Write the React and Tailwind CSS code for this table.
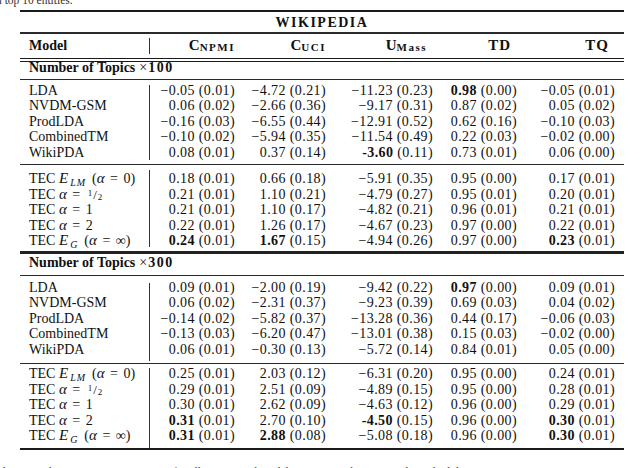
import React from "react";

// column widths after the vertical bar (right edges at 235, 326, 433, 517, 615)
const COLS = ["w-[85px]", "w-[91px]", "w-[107px]", "w-[84px]", "w-[98px]"];

const Sub = ({ children }) => (
  <span className="relative top-[3px] text-[10px] leading-none tracking-[1px] ml-[1px]">
    {children}
  </span>
);

const Half = () => (
  <span className="ml-[2px] leading-none">
    <span className="relative -top-[3px] text-[9px] leading-none">1</span>
    <span className="text-[13px] leading-none mx-[1px]">/</span>
    <span className="relative top-[1px] text-[9px] leading-none">2</span>
  </span>
);

const Eq = () => <span className="mx-[5.5px]">=</span>;
const Al = () => <i className="text-[15px] leading-[12px]">α</i>;
const E = () => <i className="text-[15px] leading-[12px] mr-[1px]">E</i>;

const tecLabels = [
  <>
    TEC <E />
    <Sub>
      <i>LM</i>
    </Sub>
    <span className="ml-[6px]">(</span>
    <Al />
    <Eq />
    0)
  </>,
  <>
    TEC <Al />
    <Eq />
    <Half />
  </>,
  <>
    TEC <Al />
    <Eq />1
  </>,
  <>
    TEC <Al />
    <Eq />2
  </>,
  <>
    TEC <E />
    <Sub>
      <i>G</i>
    </Sub>
    <span className="ml-[6px]">(</span>
    <Al />
    <Eq />
    ∞)
  </>,
];

const baseLabels = ["LDA", "NVDM-GSM", "ProdLDA", "CombinedTM", "WikiPDA"];

const data100 = [
  [["−0.05", "0.01"], ["−4.72", "0.21"], ["−11.23", "0.23"], ["0.98", "0.00", 1], ["−0.05", "0.01"]],
  [["0.06", "0.02"], ["−2.66", "0.36"], ["−9.17", "0.31"], ["0.87", "0.02"], ["0.05", "0.02"]],
  [["−0.16", "0.03"], ["−6.55", "0.44"], ["−12.91", "0.52"], ["0.62", "0.16"], ["−0.10", "0.03"]],
  [["−0.10", "0.02"], ["−5.94", "0.35"], ["−11.54", "0.49"], ["0.22", "0.03"], ["−0.02", "0.00"]],
  [["0.08", "0.01"], ["0.37", "0.14"], ["-3.60", "0.11", 1], ["0.73", "0.01"], ["0.06", "0.00"]],
];

const tec100 = [
  [["0.18", "0.01"], ["0.66", "0.18"], ["−5.91", "0.35"], ["0.95", "0.00"], ["0.17", "0.01"]],
  [["0.21", "0.01"], ["1.10", "0.21"], ["−4.79", "0.27"], ["0.95", "0.01"], ["0.20", "0.01"]],
  [["0.21", "0.01"], ["1.10", "0.17"], ["−4.82", "0.21"], ["0.96", "0.01"], ["0.21", "0.01"]],
  [["0.22", "0.01"], ["1.26", "0.17"], ["−4.67", "0.23"], ["0.97", "0.00"], ["0.22", "0.01"]],
  [["0.24", "0.01", 1], ["1.67", "0.15", 1], ["−4.94", "0.26"], ["0.97", "0.00"], ["0.23", "0.01", 1]],
];

const data300 = [
  [["0.09", "0.01"], ["−2.00", "0.19"], ["−9.42", "0.22"], ["0.97", "0.00", 1], ["0.09", "0.01"]],
  [["0.06", "0.02"], ["−2.31", "0.37"], ["−9.23", "0.39"], ["0.69", "0.03"], ["0.04", "0.02"]],
  [["−0.14", "0.02"], ["−5.82", "0.37"], ["−13.28", "0.36"], ["0.44", "0.17"], ["−0.06", "0.03"]],
  [["−0.13", "0.03"], ["−6.20", "0.47"], ["−13.01", "0.38"], ["0.15", "0.03"], ["−0.02", "0.00"]],
  [["0.06", "0.01"], ["−0.30", "0.13"], ["−5.72", "0.14"], ["0.84", "0.01"], ["0.05", "0.00"]],
];

const tec300 = [
  [["0.25", "0.01"], ["2.03", "0.12"], ["−6.31", "0.20"], ["0.95", "0.00"], ["0.24", "0.01"]],
  [["0.29", "0.01"], ["2.51", "0.09"], ["−4.89", "0.15"], ["0.95", "0.00"], ["0.28", "0.01"]],
  [["0.30", "0.01"], ["2.62", "0.09"], ["−4.63", "0.12"], ["0.96", "0.00"], ["0.29", "0.01"]],
  [["0.31", "0.01", 1], ["2.70", "0.10"], ["-4.50", "0.15", 1], ["0.96", "0.00"], ["0.30", "0.01", 1]],
  [["0.31", "0.01", 1], ["2.88", "0.08", 1], ["−5.08", "0.18"], ["0.96", "0.00"], ["0.30", "0.01", 1]],
];

// one block of rows with the vertical bar; bar margins trim it like the latex rule
const Group = ({ labels, rows, pad, bar }) => (
  <div className={`flex leading-[15.5px] ${pad}`}>
    <div className="w-[129px] pl-[9px] shrink-0">
      {labels.map((l, i) => (
        <div key={i} className="h-[15.5px] whitespace-nowrap">
          {l}
        </div>
      ))}
    </div>
    <div className={`w-px bg-[#333] shrink-0 ${bar}`} />
    <div className="tracking-[0.4px]">
      {rows.map((r, i) => (
        <div key={i} className="flex h-[15.5px]">
          {r.map(([v, sd, b], j) => (
            <div key={j} className={`${COLS[j]} text-right whitespace-nowrap`}>
              {b ? <b>{v}</b> : v} ({sd})
            </div>
          ))}
        </div>
      ))}
    </div>
  </div>
);

const Section = ({ n, pad }) => (
  <div className={`pl-[9px] leading-[12px] font-bold ${pad}`}>
    Number of Topics
    <span className="font-normal ml-[4px] mr-[1px]">×</span>
    <span className="tracking-[1.5px]">{n}</span>
  </div>
);

const Head = ({ big, small, cls = "" }) => (
  <div className={`text-right font-bold ${cls}`}>
    <span className="text-[15px]">{big}</span>
    {small && (
      <span className="relative top-[1px] text-[11px] tracking-[1.5px]">{small}</span>
    )}
  </div>
);

export default function App() {
  return (
    <div className="w-[640px] h-[468px] overflow-hidden bg-white text-[#111] font-['Liberation_Serif',serif] text-[14px]">
      <div className="-mt-[6px] h-[12px] -ml-[4px] leading-[12px] text-[11.5px] text-[#333] whitespace-nowrap">
        n top 10 entities.
      </div>

      <div className="mt-[4px] mx-[20px] w-[604px]">
        <div className="h-[2px] bg-[#1a1a1a]" />
        <div className="h-[20px] flex items-center justify-center font-bold tracking-[1.5px] pt-[1px]">
          WIKIPEDIA
        </div>
        <div className="h-[1.5px] bg-[#2a2a2a]" />

        {/* header */}
        <div className="flex h-[24px] items-center">
          <div className="w-[129px] pl-[9px] font-bold">Model</div>
          <div className="w-px h-[16px] bg-[#333]" />
          <Head big="C" small="NPMI" cls={COLS[0]} />
          <Head big="C" small="UCI" cls={`${COLS[1]} -mr-[6px] pl-[6px]`} />
          <Head big="U" small="Mass" cls={`${COLS[2]} pl-[6px]`} />
          <div className={`${COLS[3]} text-right font-bold text-[15px] tracking-[1px]`}>TD</div>
          <div className={`${COLS[4]} text-right font-bold text-[15px] tracking-[1px]`}>TQ</div>
        </div>
        <div className="h-[1.5px] bg-[#1a1a1a]" />
        <div className="h-[1.5px]" />
        <div className="h-[1.5px] bg-[#1a1a1a]" />

        <Section n="100" pad="h-[16.5px]" />
        <div className="h-[1.5px] bg-[#2a2a2a]" />
        <Group labels={baseLabels} rows={data100} pad="pt-[2.5px] pb-[4px]" bar="mt-[2.5px]" />
        <div className="h-px bg-[#2a2a2a]" />
        <Group labels={tecLabels} rows={tec100} pad="pt-[6px] pb-[2.5px]" bar="-mt-[1px] mb-[1.5px]" />
        <div className="h-[3px] bg-[#222]" />

        <Section n="300" pad="h-[20.5px] pt-[2.5px]" />
        <div className="h-px bg-[#2a2a2a]" />
        <Group labels={baseLabels} rows={data300} pad="pt-[4px] pb-[6px]" bar="mt-[3px] -mb-[3.5px]" />
        <div className="h-px bg-[#2a2a2a]" />
        <Group labels={tecLabels} rows={tec300} pad="pt-[2px] pb-[4px]" bar="mt-[1.5px] -mb-[4px]" />
        <div className="h-[2.5px] bg-[#1a1a1a]" />
      </div>

      <div className="mt-[15.5px] leading-[12px] text-[11.5px] text-[#444] whitespace-nowrap -ml-[3px]">
        ble 2: Results on WIKIPEDIA corpus for all metrics and models. We report the mean and standard deviation over 5 runs.
      </div>
    </div>
  );
}
